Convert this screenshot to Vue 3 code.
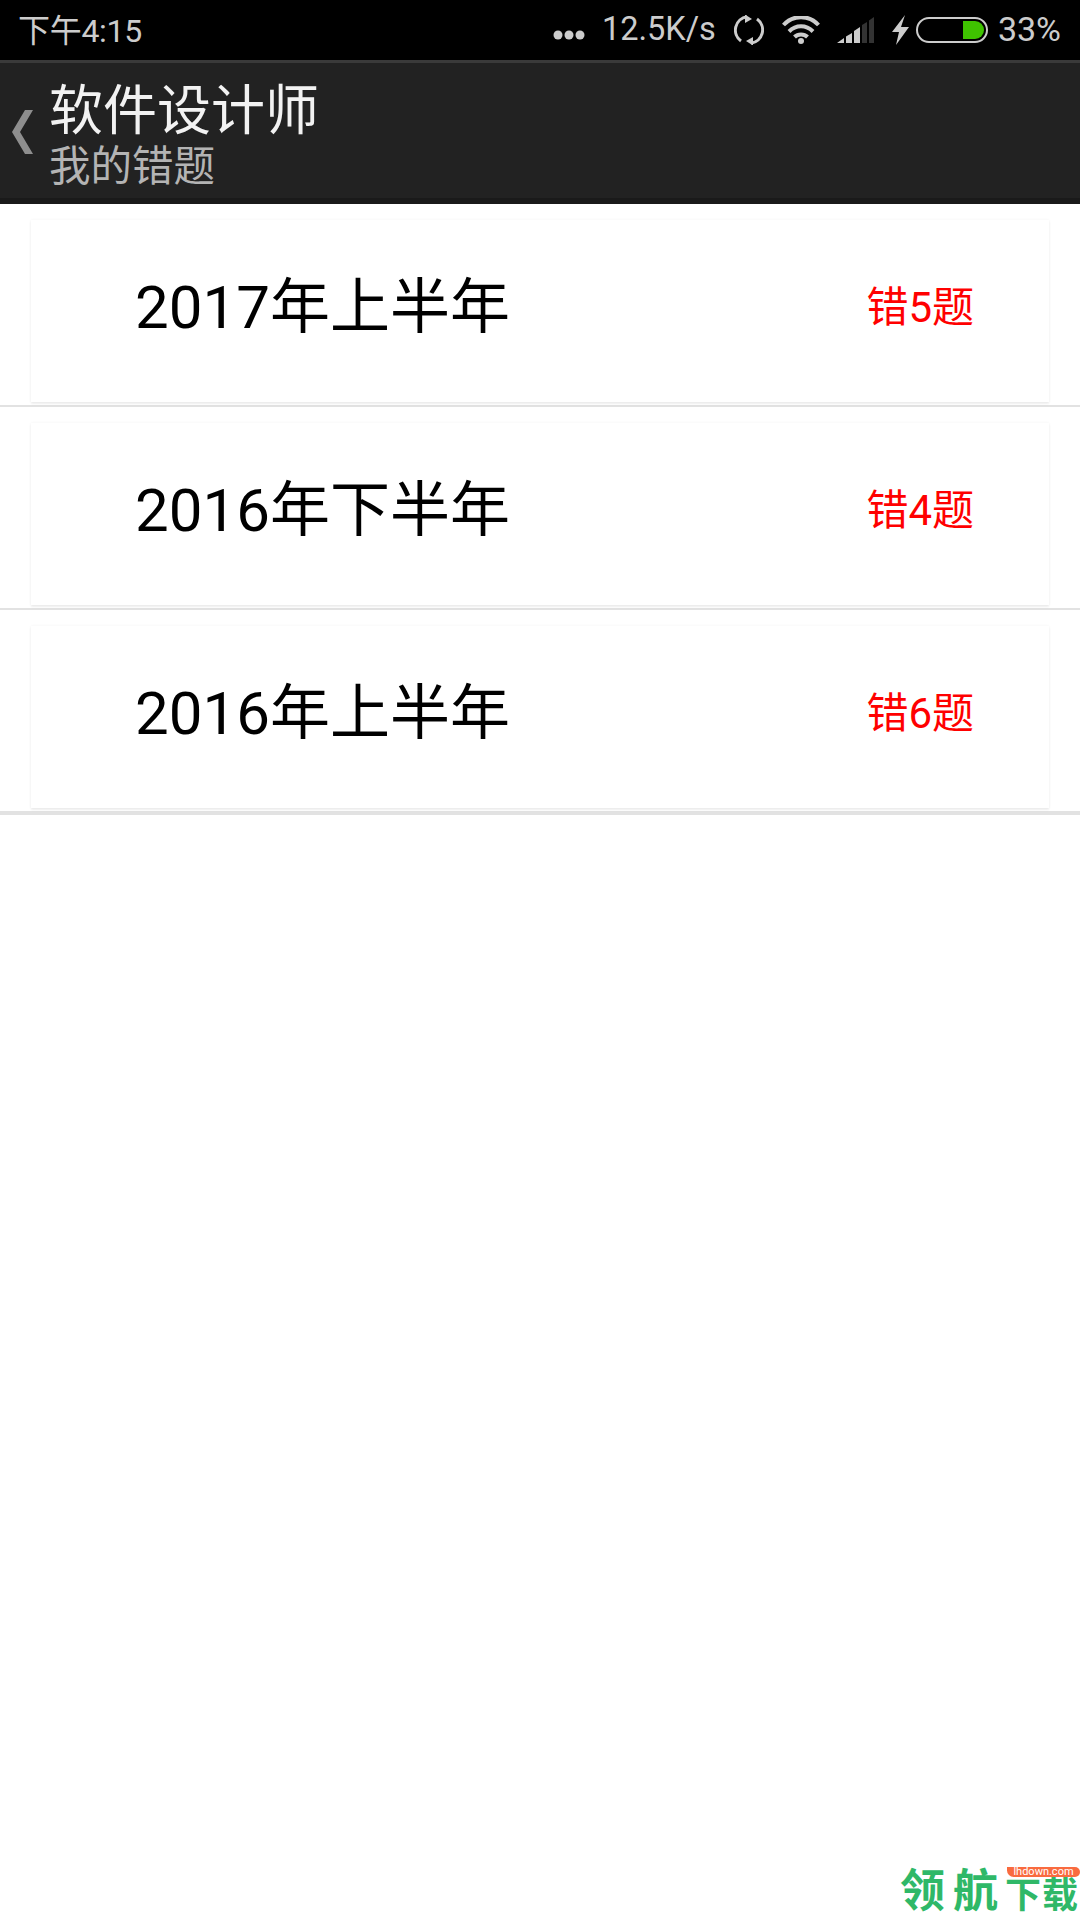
<template>
  <div class="page">
    <div class="status-bar">
      <span class="clock">下午4:15</span>
      <div class="status-right">
        <svg class="dots" width="32" height="10" viewBox="0 0 32 10">
          <circle cx="5" cy="5" r="4.500" fill="#ccc" />
          <circle cx="16" cy="5" r="4.500" fill="#ccc" />
          <circle cx="27" cy="5" r="4.500" fill="#ccc" />
        </svg>
        <span class="speed">12.5K/s</span>
        <svg class="sync" width="30" height="30" viewBox="0 0 30 30" fill="none" stroke="#ccc" stroke-width="3">
          <path d="M7 26A13.500 13.500 0 0 1 13 1.700" />
          <path d="M23 4A13.500 13.500 0 0 1 17 28.300" />
          <path d="M11 -0.500L18 4L11 8z" fill="#ccc" stroke="none" />
          <path d="M19 30.500L12 26L19 22z" fill="#ccc" stroke="none" />
        </svg>
        <svg class="wifi" width="38" height="28" viewBox="0 0 38 28" fill="none" stroke="#ccc" stroke-width="4">
          <path d="M1.500 9C11 -1.500 27 -1.500 36.500 9" />
          <path d="M7 15.500C14 8.500 24 8.500 31 15.500" />
          <path d="M12.500 21C16 17.500 22 17.500 25.500 21" />
          <circle cx="19" cy="25" r="3" fill="#ccc" stroke="none" />
        </svg>
        <svg class="signal" width="37" height="26" viewBox="0 0 37 26">
          <path d="M0 26L7 21V26z" fill="#ccc" />
          <path d="M9 19.500L15 16V26H9z" fill="#ccc" />
          <path d="M17 14L23 10V26H17z" fill="#ccc" />
          <path d="M25 8L30 5V26H25z" fill="#333" />
          <path d="M32 3.500L37 0V26H32z" fill="#333" />
        </svg>
        <svg class="bolt" width="17" height="30" viewBox="0 0 17 30">
          <path d="M13 0L0 17H7L4 30L17 12H9z" fill="#ccc" />
        </svg>
        <div class="battery"><div class="battery-level"></div></div>
        <span class="percent">33%</span>
      </div>
    </div>

    <div class="app-bar">
      <svg class="back" width="22" height="44" viewBox="0 0 22 44">
        <path d="M21 0L8 22L21 44H13L0 22L13 0z" fill="#8e8e8e" />
      </svg>
      <div class="titles">
        <div class="title">软件设计师</div>
        <div class="subtitle">我的错题</div>
      </div>
    </div>

    <div class="list">
      <div v-for="item in items" :key="item.name" class="row">
        <div class="card">
          <span class="name">{{ item.name }}</span>
          <span class="wrong">错{{ item.wrong }}题</span>
        </div>
      </div>
    </div>

    <div class="watermark">
      <span class="wm-big">领航</span>
      <span class="wm-small">下载</span>
      <span class="wm-tag">lhdown.com</span>
    </div>
  </div>
</template>

<script setup>
const items = [
  { name: '2017年上半年', wrong: 5 },
  { name: '2016年下半年', wrong: 4 },
  { name: '2016年上半年', wrong: 6 }
];
</script>

<style>
html,
body {
  margin: 0;
  background: #fff;
}
</style>

<style scoped>
.page {
  position: relative;
  width: 1080px;
  height: 1920px;
  overflow: hidden;
  background: #fff;
  font-family: Roboto, "Noto Sans CJK SC", sans-serif;
}

.status-bar {
  height: 60px;
  background: #000;
  border-bottom: 3px solid #3a3a3a;
  display: flex;
  align-items: center;
  justify-content: space-between;
  padding: 0 19px 0 18px;
  color: #ccc;
}

.clock {
  font-size: 32px;
  letter-spacing: -0.3px;
  margin-top: -4px;
}

.status-right {
  display: flex;
  align-items: center;
}

.dots {
  margin-top: 10px;
  margin-right: 17px;
}

.speed {
  font-size: 32.500px;
  margin-top: -3px;
  margin-right: 18px;
}

.sync {
  margin-right: 18px;
}

.wifi {
  margin-right: 17px;
}

.signal {
  margin-right: 18px;
}

.bolt {
  margin-right: 7px;
}

.battery {
  box-sizing: border-box;
  width: 72px;
  height: 26px;
  border: 2px solid #ccc;
  border-radius: 13px;
  padding: 2px;
  display: flex;
  justify-content: flex-end;
  margin-right: 10px;
}

.battery-level {
  width: 21px;
  background: #3fc300;
  border-radius: 0 9px 9px 0;
}

.percent {
  font-size: 34px;
  margin-top: -3px;
}

.app-bar {
  box-sizing: border-box;
  height: 141px;
  background: #222;
  border-bottom: 6px solid #1a1a1a;
  display: flex;
  align-items: center;
  padding-left: 12px;
}

.back {
  margin-top: 2px;
  margin-right: 15px;
}

.titles {
  margin-top: 10px;
}

.title {
  color: #f2f2f2;
  font-size: 54px;
  line-height: 62px;
}

.subtitle {
  color: #b4b4b4;
  font-size: 41.500px;
  line-height: 47px;
}

.row {
  box-sizing: border-box;
  height: 203px;
  padding: 16px 31px 0;
  border-bottom: 2px solid #e2e2e2;
}

.row:last-child {
  height: 205px;
  border-bottom-width: 4px;
}

.card {
  box-sizing: border-box;
  height: 182px;
  background: #fff;
  box-shadow: 0 2px 2px rgba(0, 0, 0, 0.06), 0 0 3px rgba(0, 0, 0, 0.05);
  display: flex;
  align-items: center;
  justify-content: space-between;
  padding: 0 75px 20px 104px;
}

.name {
  color: #000;
  font-size: 60px;
}

.wrong {
  color: #f00;
  font-size: 42px;
  margin-top: 4px;
}

.watermark {
  position: absolute;
  left: 900px;
  top: 1867px;
  width: 180px;
  height: 48px;
  display: flex;
  align-items: flex-end;
  color: #2fb868;
  font-weight: 700;
}

.wm-big {
  font-size: 45px;
  line-height: 46px;
  letter-spacing: 8px;
  margin-right: -1px;
}

.wm-small {
  font-size: 36px;
  line-height: 36px;
  letter-spacing: 1px;
  margin-bottom: 1px;
}

.wm-tag {
  position: absolute;
  right: 0;
  top: 0;
  width: 73px;
  height: 10px;
  background: #f96b3f;
  border-radius: 0 6px 6px 8px;
  color: #fff;
  font-size: 11px;
  font-weight: 400;
  line-height: 10px;
  text-align: center;
}
</style>
